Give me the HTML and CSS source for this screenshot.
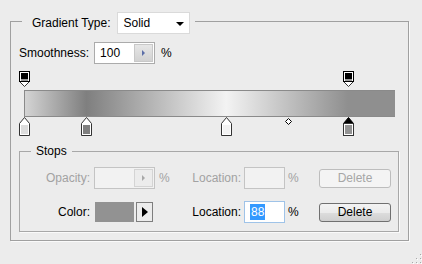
FILE: index.html
```html
<!DOCTYPE html>
<html lang="en">
<head>
    <meta charset="utf-8">
    <title>Gradient Editor</title>
    <link rel="stylesheet" href="styles.css">
</head>
<body>
    <div class="panel">
        <div class="panel-head">
            <span>Gradient Type:</span>
            <div class="dropdown"><span>Solid</span><span class="caret"></span></div>
        </div>

        <div class="smooth">
            <span>Smoothness:</span>
            <div class="spin"><span class="spin-val">100</span><span class="spin-btn"><span class="tri"></span></span></div>
            <span class="pct">%</span>
        </div>

        <div class="ramp">
            <div class="stops-top">
                <svg class="stop-t" style="left: 0%" width="11" height="16" viewBox="0 0 11 16">
                    <polygon points="0.5,10.5 10.5,10.5 5.5,15.5" fill="#fff" stroke="#333"/>
                    <rect x="0.5" y="0.5" width="10" height="10" fill="#fff" stroke="#000"/>
                    <rect x="2" y="2" width="7" height="6" fill="#000"/>
                    <rect x="2" y="8" width="7" height="2" fill="#9a9a9a"/>
                </svg>
                <svg class="stop-t" style="left: 87.3%" width="11" height="16" viewBox="0 0 11 16">
                    <polygon points="0.5,10.5 10.5,10.5 5.5,15.5" fill="#fff" stroke="#333"/>
                    <rect x="0.5" y="0.5" width="10" height="10" fill="#fff" stroke="#000"/>
                    <rect x="2" y="2" width="7" height="6" fill="#000"/>
                    <rect x="2" y="8" width="7" height="2" fill="#9a9a9a"/>
                </svg>
            </div>
            <div class="bar"></div>
            <div class="stops-bottom">
                <svg class="stop-b" style="left: 0%" width="11" height="19" viewBox="0 0 11 19">
                    <path d="M5.5 0.5 L10.5 6.5 V18.5 H0.5 V6.5 Z" fill="#fff" stroke="#333"/>
                    <rect x="2" y="8" width="7" height="9" fill="#dcdcdc"/>
                </svg>
                <svg class="stop-b" style="left: 16.6%" width="11" height="19" viewBox="0 0 11 19">
                    <path d="M5.5 0.5 L10.5 6.5 V18.5 H0.5 V6.5 Z" fill="#fff" stroke="#333"/>
                    <rect x="2" y="8" width="7" height="9" fill="#7f7f7f"/>
                </svg>
                <svg class="stop-b" style="left: 54.4%" width="11" height="19" viewBox="0 0 11 19">
                    <path d="M5.5 0.5 L10.5 6.5 V18.5 H0.5 V6.5 Z" fill="#fff" stroke="#333"/>
                    <rect x="2" y="8" width="7" height="9" fill="#f3f3f3"/>
                </svg>
                <svg class="mid" style="left: 71.2%" width="7" height="7" viewBox="0 0 7 7">
                    <polygon points="3.5,0.5 6.5,3.5 3.5,6.5 0.5,3.5" fill="#fff" stroke="#000"/>
                </svg>
                <svg class="stop-b" style="left: 87.3%" width="11" height="19" viewBox="0 0 11 19">
                    <path d="M5.5 0.5 L10.5 6.5 V18.5 H0.5 V6.5 Z" fill="#000" stroke="#000"/>
                    <rect x="0.5" y="6.5" width="10" height="12" fill="#fff" stroke="#333"/>
                    <rect x="2" y="8" width="7" height="9" fill="#939393"/>
                </svg>
            </div>
        </div>

        <div class="group">
            <div class="group-title">Stops</div>

            <div class="stop-row off">
                <span class="lbl">Opacity:</span>
                <div class="spin"><span class="spin-val"></span><span class="spin-btn"><span class="tri"></span></span></div>
                <span class="unit">%</span>
                <span class="lbl loc">Location:</span>
                <div class="field"></div>
                <span class="unit2">%</span>
                <button class="btn">Delete</button>
            </div>

            <div class="stop-row">
                <span class="lbl">Color:</span>
                <div class="color-cell">
                    <span class="swatch"></span>
                    <span class="pick"><span class="rtri"></span></span>
                </div>
                <span class="unit"></span>
                <span class="lbl loc">Location:</span>
                <div class="field focus"><span class="sel">88</span></div>
                <span class="unit2">%</span>
                <button class="btn">Delete</button>
            </div>
        </div>
    </div>

    <svg class="grip" width="11" height="11" viewBox="0 0 11 11">
        <g fill="#fff">
            <rect x="10" y="2" width="1" height="1"/>
            <rect x="10" y="6" width="1" height="1"/>
            <rect x="6" y="6" width="1" height="1"/>
            <rect x="10" y="10" width="1" height="1"/>
            <rect x="6" y="10" width="1" height="1"/>
            <rect x="2" y="10" width="1" height="1"/>
        </g>
        <g fill="#a8a8a8">
            <rect x="9" y="1" width="1" height="1"/>
            <rect x="9" y="5" width="1" height="1"/>
            <rect x="5" y="5" width="1" height="1"/>
            <rect x="9" y="9" width="1" height="1"/>
            <rect x="5" y="9" width="1" height="1"/>
            <rect x="1" y="9" width="1" height="1"/>
        </g>
    </svg>
</body>
</html>
```

FILE: styles.css
```css
html, body {
    height: 100%;
}

body {
    margin: 0;
    padding: 21px 0 0 10px;
    box-sizing: border-box;
    overflow: hidden;
    background-color: #ececec;
    font-family: "Liberation Sans", Arial, sans-serif;
    font-size: 12px;
    color: #000;
}

.panel {
    width: 399px;
    height: 220px;
    box-sizing: border-box;
    border: 1px solid #a0a0a0;
    box-shadow: 1px 1px 0 #fafafa;
}

.panel-head {
    display: flex;
    align-items: center;
    gap: 6px;
    width: fit-content;
    height: 22px;
    margin: -10px 0 0 11px;
    padding: 0 5px 0 10px;
    background-color: #ececec;
}

.dropdown {
    display: flex;
    align-items: center;
    justify-content: space-between;
    width: 73px;
    height: 22px;
    box-sizing: border-box;
    padding: 0 5px 0 6px;
    border: 1px solid #dadada;
    background-color: #fff;
}

.caret {
    width: 0;
    height: 0;
    border-top: 4px solid #000;
    border-left: 4px solid transparent;
    border-right: 4px solid transparent;
    margin-top: 1px;
}

.smooth {
    display: flex;
    align-items: center;
    gap: 5px;
    height: 22px;
    margin: 8px 0 0 8px;
}

.spin {
    display: flex;
    width: 61px;
    height: 22px;
    box-sizing: border-box;
    border: 1px solid #ababab;
    background-color: #fff;
}

.spin-val {
    flex: 1;
    line-height: 20px;
    padding-left: 5px;
}

.spin-btn {
    display: flex;
    align-items: center;
    justify-content: center;
    width: 19px;
    height: 18px;
    margin: 1px 1px 0 0;
    border: 1px solid #c8c8c8;
    box-sizing: border-box;
    background: linear-gradient(#e6e6e6, #d2d2d2);
}

.tri {
    width: 0;
    height: 0;
    border-left: 3px solid #5b6ea8;
    border-top: 3px solid transparent;
    border-bottom: 3px solid transparent;
}

.pct {
    margin-left: 1px;
}

.ramp {
    width: 371px;
    margin: 6px 0 0 13px;
}

.stops-top {
    position: relative;
    height: 20px;
}

.stops-bottom {
    position: relative;
    height: 19px;
}

.stop-t {
    position: absolute;
    top: 1px;
    margin-left: -5px;
}

.stop-b {
    position: absolute;
    top: 0;
    margin-left: -5px;
}

.mid {
    position: absolute;
    top: 1px;
    margin-left: -3px;
}

.bar {
    height: 27px;
    box-sizing: border-box;
    border: 1px solid #8a8a8a;
    border-right: none;
    background: linear-gradient(to right, #d4d4d4 0%, #7f7f7f 16.6%, #f3f3f3 54.4%, #8f8f8f 87.3%, #8f8f8f 100%);
}

.group {
    width: 380px;
    height: 81px;
    box-sizing: border-box;
    margin: 15px 0 0 8px;
    border: 1px solid #a8a8a8;
    box-shadow: 1px 1px 0 #fafafa;
}

.group-title {
    width: fit-content;
    line-height: 15px;
    margin: -8px 0 0 11px;
    padding: 0 5px;
    background-color: #ececec;
}

.stop-row {
    display: grid;
    grid-template-columns: 74px 61px 35px 54px 41px 34px 72px;
    align-items: center;
    height: 22px;
    margin-top: 8px;
}

.stop-row + .stop-row {
    margin-top: 12px;
}

.lbl {
    text-align: right;
    padding-right: 4px;
}

.loc {
    padding-right: 3px;
}

.unit {
    padding-left: 4px;
}

.unit2 {
    padding-left: 3px;
}

.off {
    color: #a2a2a2;
}

.off .spin {
    border-color: #c4c4c4;
    background-color: #f2f2f2;
}

.off .spin-btn {
    border-color: #d4d4d4;
    background: #ececec;
}

.off .tri {
    border-left-color: #a8a8a8;
}

.field {
    height: 22px;
    box-sizing: border-box;
    border: 1px solid #c4c4c4;
    background-color: #f2f2f2;
    padding-left: 5px;
    line-height: 20px;
}

.field.focus {
    border-color: #9fc3e8;
    background-color: #fff;
}

.sel {
    background-color: #3399ff;
    color: #fff;
    padding: 1px 1px;
}

.color-cell {
    display: flex;
    gap: 2px;
    padding-left: 1px;
}

.swatch {
    width: 39px;
    height: 20px;
    background-color: #929292;
}

.pick {
    display: flex;
    align-items: center;
    justify-content: center;
    width: 17px;
    height: 20px;
    box-sizing: border-box;
    border: 1px solid #7e7e7e;
    background-color: #ececec;
}

.rtri {
    width: 0;
    height: 0;
    border-left: 6px solid #000;
    border-top: 5px solid transparent;
    border-bottom: 5px solid transparent;
}

.btn {
    width: 72px;
    height: 19px;
    padding: 0;
    font-family: inherit;
    font-size: 12px;
    color: #000;
    border: 1px solid #707070;
    border-radius: 3px;
    background: linear-gradient(#f3f3f3 0%, #ebebeb 50%, #dddddd 51%, #cfcfcf 100%);
}

.off .btn {
    color: #a6a6a6;
    border-color: #bdbdbd;
    background: #f4f4f4;
}

.grip {
    position: fixed;
    right: 0;
    bottom: 0;
}
```
